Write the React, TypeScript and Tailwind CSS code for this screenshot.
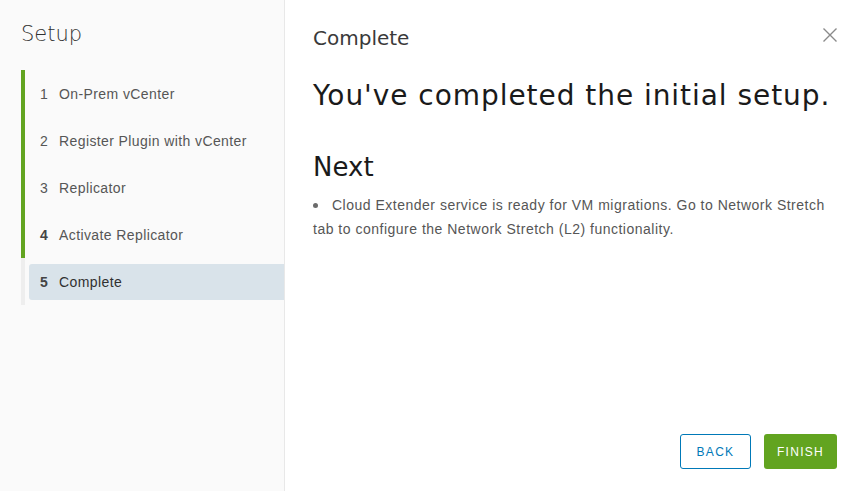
import React from "react";

const steps = [
  { n: "1", label: "On-Prem vCenter", done: true },
  { n: "2", label: "Register Plugin with vCenter", done: true },
  { n: "3", label: "Replicator", done: true },
  { n: "4", label: "Activate Replicator", done: true },
  { n: "5", label: "Complete", done: false },
];

export default function App() {
  return (
    <div className="flex h-screen w-full bg-white overflow-hidden">
      <aside className="w-[285px] shrink-0 h-full bg-[#fafafa] border-r border-[#e8e8e8] pl-[21px]">
        <div
          className="mt-[20px] h-[28px] leading-[28px] text-[21px] text-[#313131]"
          style={{ fontFamily: '"DejaVu Sans", sans-serif', fontWeight: 300 }}
        >
          Setup
        </div>
        <ul className="mt-[22px]" style={{ fontFamily: '"Liberation Sans", Arial, sans-serif' }}>
          {steps.map((s) => {
            const active = !s.done;
            return (
              <li
                key={s.n}
                className={`h-[47px] pt-[6px] pl-[4px] border-l-4 ${
                  s.done ? "border-[#62a420]" : "border-[#eeeeee]"
                }`}
              >
                <div
                  className={`h-[36px] leading-[37px] pl-[11px] text-[14px] tracking-[0.4px] flex rounded-l-[3px] ${
                    active ? "bg-[#d9e3ea] text-[#313131]" : "text-[#565656]"
                  }`}
                >
                  <span
                    className={`w-[19px] ${
                      s.n === "4" || s.n === "5" ? "font-bold text-[#444]" : ""
                    }`}
                  >
                    {s.n}
                  </span>
                  <span>{s.label}</span>
                </div>
              </li>
            );
          })}
        </ul>
      </aside>

      <main className="flex-1 h-full flex flex-col pl-[28px] pr-[19px]">
        <div className="flex justify-between items-start mt-[26px]">
          <div
            className="h-[24px] leading-[24px] text-[20px] text-[#3a3a3a]"
            style={{ fontFamily: '"DejaVu Sans", sans-serif' }}
          >
            Complete
          </div>
          <svg
            width="14"
            height="14"
            viewBox="0 0 14 14"
            className="mt-[2px]"
            fill="none"
            stroke="#8a8a8a"
            strokeWidth="1.4"
          >
            <path d="M0.5 0.5 L13.5 13.5 M13.5 0.5 L0.5 13.5" />
          </svg>
        </div>

        <h1
          className="mt-[28px] h-[36px] leading-[36px] text-[28px] tracking-[0.95px] text-[#1a1a1a] whitespace-nowrap"
          style={{ fontFamily: '"DejaVu Sans", sans-serif' }}
        >
          You've completed the initial setup.
        </h1>

        <h2
          className="mt-[37px] h-[32px] leading-[32px] text-[26px] text-[#1a1a1a]"
          style={{ fontFamily: '"DejaVu Sans", sans-serif' }}
        >
          Next
        </h2>

        <p
          className="mt-[10px] w-[524px] leading-[24px] text-[14px] tracking-[0.5px] text-[#565656]"
          style={{ fontFamily: '"Liberation Sans", Arial, sans-serif' }}
        >
          <span className="inline-block w-[5px] h-[5px] rounded-full bg-[#6b6b6b] mr-[14px] align-middle relative -top-[1px]" />
          Cloud Extender service is ready for VM migrations. Go to Network Stretch tab to configure the Network Stretch (L2) functionality.
        </p>

        <div className="flex-1" />

        <div
          className="flex justify-end gap-[13px] mb-[22px]"
          style={{ fontFamily: '"Liberation Sans", Arial, sans-serif' }}
        >
          <button className="w-[71px] h-[35px] pt-[1px] rounded-[3px] border border-[#0079b8] bg-white text-[#0079b8] text-[12px] tracking-[1.3px] flex items-center justify-center">
            BACK
          </button>
          <button className="w-[73px] h-[35px] pt-[1px] rounded-[3px] bg-[#62a420] text-white text-[12px] tracking-[1.3px] flex items-center justify-center">
            FINISH
          </button>
        </div>
      </main>
    </div>
  );
}
